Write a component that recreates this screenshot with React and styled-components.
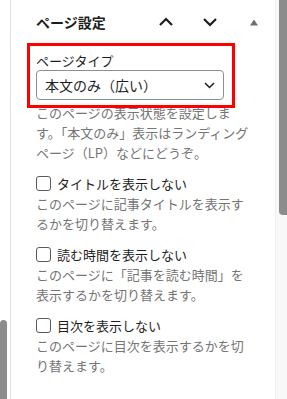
import React from "react";
import styled, { createGlobalStyle } from "styled-components";

const GlobalStyle = createGlobalStyle`
  html, body {
    margin: 0;
    background: #fff;
  }
  body {
    font-family: "Noto Sans CJK JP", "Noto Sans", sans-serif;
    color: #1e1e1e;
  }
`;

const Frame = styled.div`
  display: flex;
  width: 287px;
  height: 399px;
  overflow: hidden;
  background: #fff;
`;

const LeftGutter = styled.div`
  width: 10px;
  border-right: 1px solid #e0e0e0;
  display: flex;
  flex-direction: column;
  justify-content: flex-end;
`;

const LeftThumb = styled.div`
  width: 7px;
  height: 79px;
  background: #8c8c8c;
  border-radius: 4px 4px 0 0;
`;

const Panel = styled.div`
  flex: 1;
  display: flex;
  flex-direction: column;
  min-width: 0;
`;

const RightBar = styled.div`
  width: 11px;
  background: #f8f8f8;
  border-left: 1px solid #f0f0f0;
  display: flex;
  justify-content: flex-end;
  align-items: flex-start;
`;

const RightThumb = styled.div`
  width: 8px;
  height: 215px;
  background: #8c8c8c;
  border-radius: 0 0 0 4px;
`;

const Header = styled.div`
  height: 44px;
  display: flex;
  align-items: center;
  padding-left: 25px;
`;

const Title = styled.h2`
  flex: 1;
  margin: 0;
  font-size: 14px;
  font-weight: 700;
  line-height: 20px;
`;

const IconButton = styled.button`
  width: ${(p) => p.width || 44}px;
  height: 44px;
  padding: 0;
  border: 0;
  background: none;
  display: flex;
  align-items: center;
  justify-content: center;
  cursor: pointer;
`;

const Body = styled.div`
  padding: 8px 26px 0 25px;
`;

const Field = styled.div`
  position: relative;
  width: 188px;
  display: flex;
  flex-direction: column;
`;

const Highlight = styled.div`
  position: absolute;
  top: -9px;
  left: -9px;
  right: -11px;
  bottom: -8px;
  border: 3px solid #f00;
  pointer-events: none;
`;

const Label = styled.label`
  font-size: 13px;
  line-height: 18px;
`;

const SelectBox = styled.div`
  height: 30px;
  box-sizing: border-box;
  border: 1px solid #8c8f94;
  border-radius: 4px;
  padding: 0 8px;
  display: flex;
  align-items: center;
  justify-content: space-between;
  font-size: 14px;
`;

const Help = styled.p`
  margin: ${(p) => p.top || 0}px 0 0;
  font-size: 13px;
  line-height: 20px;
  color: #757575;
`;

const CheckRow = styled.label`
  display: flex;
  align-items: center;
  gap: 6px;
  height: 22px;
  margin-top: 9px;
  font-size: 13px;
`;

const Box = styled.input`
  appearance: none;
  margin: 0;
  width: 15px;
  height: 15px;
  border: 1px solid #5a5a5a;
  border-radius: 3px;
  background: #fff;
  flex: none;
`;

const Chevron = ({ up }) => (
  <svg width="16" height="10" viewBox="0 0 16 10">
    <polyline
      points={up ? "2,8 8,2 14,8" : "2,2 8,8 14,2"}
      fill="none"
      stroke="#1e1e1e"
      strokeWidth="2.2"
    />
  </svg>
);

const options = [
  {
    label: "タイトルを表示しない",
    help: "このページに記事タイトルを表示するかを切り替えます。",
  },
  {
    label: "読む時間を表示しない",
    help: "このページに「記事を読む時間」を表示するかを切り替えます。",
  },
  {
    label: "目次を表示しない",
    help: "このページに目次を表示するかを切り替えます。",
  },
];

export default function App() {
  return (
    <>
      <GlobalStyle />
      <Frame>
        <LeftGutter>
          <LeftThumb />
        </LeftGutter>
        <Panel>
          <Header>
            <Title>ページ設定</Title>
            <IconButton aria-label="上へ移動">
              <Chevron up />
            </IconButton>
            <IconButton aria-label="下へ移動">
              <Chevron />
            </IconButton>
            <IconButton width={43} aria-label="パネルを閉じる">
              <svg width="8" height="7" viewBox="0 0 8 7">
                <polygon points="0,6.5 4,0.5 8,6.5" fill="#6f6f6f" />
              </svg>
            </IconButton>
          </Header>
          <Body>
            <Field>
              <Highlight />
              <Label>ページタイプ</Label>
              <SelectBox>
                <span>本文のみ（広い）</span>
                <svg width="11" height="7" viewBox="0 0 11 7">
                  <polyline
                    points="1,1 5.5,5.5 10,1"
                    fill="none"
                    stroke="#1e1e1e"
                    strokeWidth="1.5"
                  />
                </svg>
              </SelectBox>
            </Field>
            <Help top={3}>
              このページの表示状態を設定します。「本文のみ」表示はランディングページ（LP）などにどうぞ。
            </Help>
            {options.map((o) => (
              <div key={o.label}>
                <CheckRow>
                  <Box type="checkbox" />
                  {o.label}
                </CheckRow>
                <Help>{o.help}</Help>
              </div>
            ))}
          </Body>
        </Panel>
        <RightBar>
          <RightThumb />
        </RightBar>
      </Frame>
    </>
  );
}
